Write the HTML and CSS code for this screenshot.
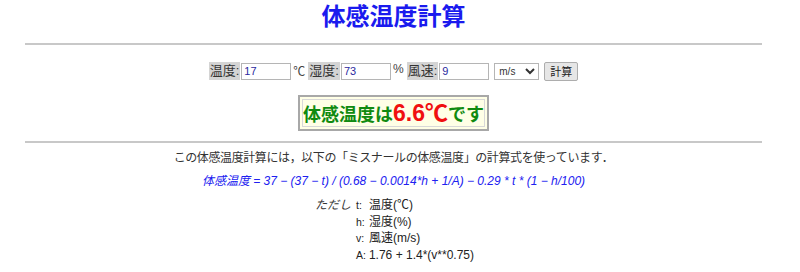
FILE: index.html
```html
<html>
<head>
    <title>体感温度計算</title>
    <link rel="stylesheet" href="styles.css">
    <meta charset="UTF-8" />
</head>
<body>
<div id="page">
    <h1>体感温度計算</h1>
    <hr />
    <form class="calc">
        <span class="lbl">温度:</span><input class="num" type="text" value="17" /><span class="unit">℃</span>
        <span class="lbl">湿度:</span><input class="num" type="text" value="73" /><span class="unit">%</span>
        <span class="lbl">風速:</span><input class="num" type="text" value="9" />
        <select class="speed"><option>m/s</option></select>
        <button type="button" class="go">計算</button>
    </form>
    <div class="result">
        <span class="g">体感温度は</span><span class="r">6.6℃</span><span class="g">です</span>
    </div>
    <hr />
    <p class="intro">この体感温度計算には，以下の「ミスナールの体感温度」の計算式を使っています．</p>
    <p class="formula">体感温度 = 37 − (37 − t) / (0.68 − 0.0014*h + 1/A) − 0.29 * t * (1 − h/100)</p>
    <div class="notes">
        <span class="tadashi">ただし</span>
        <table>
            <tr><td>t:</td><td>温度(℃)</td></tr>
            <tr><td>h:</td><td>湿度(%)</td></tr>
            <tr><td>v:</td><td>風速(m/s)</td></tr>
            <tr><td>A:</td><td>1.76 + 1.4*(v**0.75)</td></tr>
        </table>
    </div>
</div>
</body>
</html>
```

FILE: styles.css
```css
body {
margin: 0;
font-family: "Liberation Sans", "Noto Sans CJK JP", sans-serif;
font-size: 12px;
color: #222;
background: white;
}

#page {
width: 737px;
margin-left: 25px;
text-align: center;
}

h1 {
font-size: 24px;
font-weight: bold;
color: #1a1aee;
margin: 0;
padding-top: 2px;
height: 41px;
line-height: 30px;
}

hr {
border: none;
height: 2px;
background: #c8c8c8;
margin: 0;
}

.calc {
margin: 16px 0 0 0;
height: 20px;
display: flex;
justify-content: center;
align-items: center;
}

.lbl {
background: #d4d4d4;
color: #333;
font-size: 13px;
height: 18px;
line-height: 18px;
padding: 0 1px;
}

.num {
width: 50px;
height: 17px;
border: 1px solid #b5b5b5;
padding: 0 2px;
font-family: "Liberation Sans", sans-serif;
font-size: 11px;
color: #2a2aa0;
margin: 0 0 0 1px;
}

.unit {
font-size: 12px;
color: #444;
margin: 0 3px 0 2px;
align-self: flex-start;
padding-top: 1px;
}

.speed {
width: 45px;
height: 17px;
margin-left: 5px;
font-size: 10px;
font-family: "Liberation Sans", sans-serif;
border: 1px solid #b5b5b5;
background: white;
color: #333;
}

.go {
margin-left: 5px;
height: 19px;
padding: 0 5px;
font-size: 11px;
font-family: "Noto Sans CJK JP", sans-serif;
background: #e6e6e6;
border: 1px solid #adadad;
border-radius: 2px;
color: #222;
}

.result {
display: inline-block;
margin: 14px 0 10px 0;
border: 2px solid #a8a8a8;
outline: 1px solid #d8d8d8;
outline-offset: -5px;
background: #ffffe6;
padding: 1px 3px;
font-weight: bold;
height: 30px;
line-height: 30px;
}

.g {
color: #108a10;
font-size: 18px;
}

.r {
color: #f01010;
font-size: 23px;
}

.intro {
margin: 6px 0 0 0;
font-size: 12px;
letter-spacing: -0.4px;
line-height: 18px;
color: #333;
}

.formula {
margin: 6px 0 0 0;
font-size: 12px;
font-style: italic;
color: #2020f0;
line-height: 16px;
}

.notes {
display: flex;
text-align: left;
margin-top: 8px;
padding-left: 290px;
font-size: 12px;
color: #333;
}

.tadashi {
font-style: italic;
line-height: 16.5px;
}

.notes table {
border-collapse: collapse;
text-align: left;
font-size: 12px;
}

.notes td {
padding: 0;
line-height: 16.5px;
}

.notes td:first-child {
padding: 0 3px 0 5px;
font-size: 10.5px;
}
```
